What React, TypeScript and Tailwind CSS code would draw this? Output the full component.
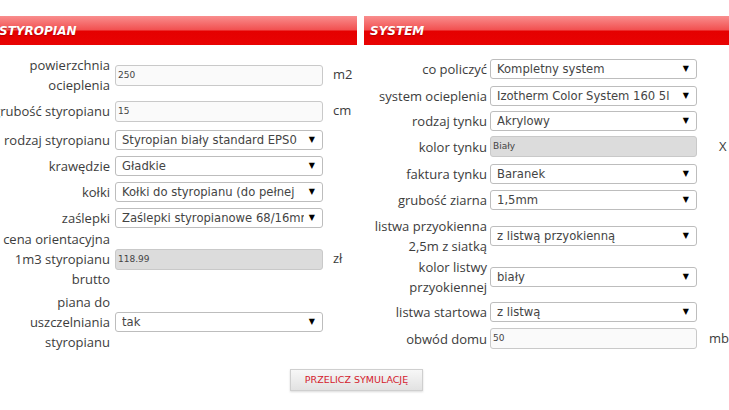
const label = "font-['Open_Sans',sans-serif] text-[13px] leading-[20px] text-[#3c3c3c] text-right whitespace-nowrap";

function Select({ value, w }: { value: string; w: string }) {
  return (
    <div
      className={`${w} h-[20px] flex items-center pl-[6px] pr-[7px] pt-[2px] border border-[#bdbdbd] rounded-[3px] bg-white font-['DejaVu_Sans',sans-serif] text-[11.6px] text-[#444] overflow-hidden`}
    >
      <span className="flex-1 min-w-0 whitespace-nowrap overflow-hidden">{value}</span>
      <span className="text-[8px] text-black ml-[5px] -mt-[2px]">▼</span>
    </div>
  );
}

function Input({ value, w, gray }: { value: string; w: string; gray?: boolean }) {
  return (
    <div
      className={`${w} h-[21px] flex items-center pl-[2px] pt-[1px] border border-[#c9c9c9] rounded-[3px] font-['DejaVu_Sans',sans-serif] text-[9px] text-[#444] ${
        gray ? "bg-[#dcdcdc]" : "bg-[#fafafa]"
      }`}
    >
      {value}
    </div>
  );
}

function Header({ title, pad }: { title: string; pad: string }) {
  return (
    <div
      className={`h-[29px] flex items-center ${pad} bg-[linear-gradient(#f98e8e,#f25050_48%,#e50000_52%,#e80303)] font-['DejaVu_Sans',sans-serif] text-[12px] font-bold italic text-white [text-shadow:0_1px_1px_rgba(120,0,0,0.5)]`}
    >
      {title}
    </div>
  );
}

function LeftRow({ h, text, children, unit }: { h: string; text: React.ReactNode; children: React.ReactNode; unit?: string }) {
  return (
    <div className={`${h} flex items-center`}>
      <div className={`w-[130px] ${label}`}>{text}</div>
      <div className="ml-[5px]">{children}</div>
      {unit && <div className="ml-[10px] font-['Open_Sans',sans-serif] text-[13px] text-[#3c3c3c]">{unit}</div>}
    </div>
  );
}

function RightRow({ h, text, children, unit, um }: { h: string; text: React.ReactNode; children: React.ReactNode; unit?: string; um?: string }) {
  return (
    <div className={`${h} flex items-center`}>
      <div className={`w-[123px] ${label}`}>{text}</div>
      <div className="ml-[3px]">{children}</div>
      {unit && <div className={`${um} font-['Open_Sans',sans-serif] text-[13px] text-[#3c3c3c]`}>{unit}</div>}
    </div>
  );
}

export default function App() {
  return (
    <div className="w-[729px] h-[410px] overflow-hidden bg-white">
      <div className="flex -ml-[20px] pt-[16px]">
        <div className="w-[377px] shrink-0 flex flex-col">
          <Header title="STYROPIAN" pad="pl-[19px]" />
          <div className="mt-[10px] flex flex-col">
            <LeftRow h="h-[40px]" text={<>powierzchnia<br />ocieplenia</>} unit="m2">
              <Input value="250" w="w-[208px]" />
            </LeftRow>
            <LeftRow h="h-[32px]" text="grubość styropianu" unit="cm">
              <Input value="15" w="w-[208px]" />
            </LeftRow>
            <LeftRow h="h-[26px]" text="rodzaj styropianu">
              <Select value="Styropian biały standard EPS0" w="w-[208px]" />
            </LeftRow>
            <LeftRow h="h-[26px]" text="krawędzie">
              <Select value="Gładkie" w="w-[208px]" />
            </LeftRow>
            <LeftRow h="h-[26px]" text="kołki">
              <Select value="Kołki do styropianu (do pełnej" w="w-[208px]" />
            </LeftRow>
            <LeftRow h="h-[26px]" text="zaślepki">
              <Select value="Zaślepki styropianowe 68/16mm" w="w-[208px]" />
            </LeftRow>
            <LeftRow h="h-[56px]" text={<>cena orientacyjna<br />1m3 styropianu<br />brutto</>} unit="zł">
              <Input value="118.99" w="w-[208px]" gray />
            </LeftRow>
            <LeftRow h="h-[70px]" text={<>piana do<br />uszczelniania<br />styropianu</>}>
              <Select value="tak" w="w-[208px]" />
            </LeftRow>
          </div>
          <div className="mt-[12px] flex justify-end">
            <button className="w-[133px] h-[22px] -mr-[66px] border border-[#cfcfcf] bg-[linear-gradient(#f7f7f7,#e2e2e2)] shadow-[0_1px_2px_rgba(0,0,0,0.15)] font-['DejaVu_Sans',sans-serif] text-[9.5px] text-[#d4202c]">
              PRZELICZ SYMULACJĘ
            </button>
          </div>
        </div>
        <div className="w-[385px] shrink-0 ml-[7px] flex flex-col">
          <Header title="SYSTEM" pad="pl-[6px]" />
          <div className="mt-[10px] flex flex-col">
            <RightRow h="h-[28px]" text="co policzyć">
              <Select value="Kompletny system" w="w-[207px]" />
            </RightRow>
            <RightRow h="h-[25px]" text="system ocieplenia">
              <Select value="Izotherm Color System 160 5l" w="w-[207px]" />
            </RightRow>
            <RightRow h="h-[26px]" text="rodzaj tynku">
              <Select value="Akrylowy" w="w-[207px]" />
            </RightRow>
            <RightRow h="h-[25px]" text="kolor tynku" unit="X" um="ml-[22px]">
              <Input value="Biały" w="w-[207px]" gray />
            </RightRow>
            <RightRow h="h-[29px]" text="faktura tynku">
              <Select value="Baranek" w="w-[207px]" />
            </RightRow>
            <RightRow h="h-[24px]" text="grubość ziarna">
              <Select value="1,5mm" w="w-[207px]" />
            </RightRow>
            <RightRow h="h-[48px]" text={<>listwa przyokienna<br />2,5m z siatką</>}>
              <Select value="z listwą przyokienną" w="w-[207px]" />
            </RightRow>
            <RightRow h="h-[34px]" text={<>kolor listwy<br />przyokiennej</>}>
              <Select value="biały" w="w-[207px]" />
            </RightRow>
            <RightRow h="h-[35px]" text="listwa startowa">
              <Select value="z listwą" w="w-[207px]" />
            </RightRow>
            <RightRow h="h-[19px]" text="obwód domu" unit="mb" um="ml-[12px]">
              <Input value="50" w="w-[207px]" />
            </RightRow>
          </div>
        </div>
      </div>
    </div>
  );
}
